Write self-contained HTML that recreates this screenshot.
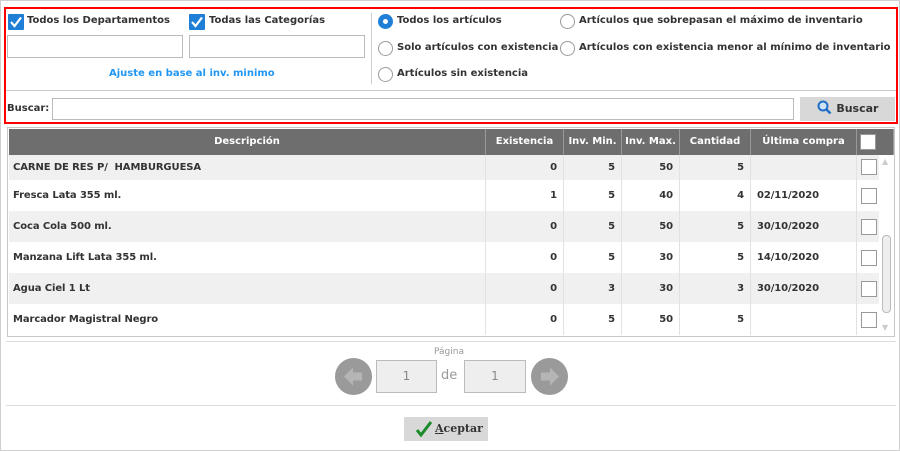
<!DOCTYPE html>
<html><head><meta charset="utf-8"><style>
*{box-sizing:border-box;margin:0;padding:0}
body{width:900px;height:451px;background:#fff;font-family:"DejaVu Sans",sans-serif;font-size:10px;font-weight:bold;color:#333;position:relative;overflow:hidden;border:1px solid #cfcfcf}
.a{position:absolute}
.red{left:3px;top:6px;width:894px;height:117px;border:2px solid #f00}
.cb{width:16px;height:16px;background:#1f7fd6;border-radius:1px}
.inp{border:1px solid #bbb;background:#fff}
.rad{width:15px;height:15px;border:1px solid #999;border-radius:50%;background:#fff}
.t{white-space:nowrap}
.hd{top:128px;height:26px;background:#6e6e6e;color:#fff;text-align:center;line-height:26px;border-right:1px solid #999;font-size:10px}
.row{left:8px;width:870px;height:31px;letter-spacing:-0.1px}
.c{position:absolute;top:0;height:100%;line-height:31px;text-align:right;padding-right:6px;border-right:1px solid #e2e2e2}
.sq{position:absolute;left:852px;width:16px;height:16px;border:1px solid #999;background:#fff}
</style></head><body>
<div class="a red"></div>
<div class="a cb" style="left:7px;top:13px"><svg width="16" height="16"><path d="M3 8l3.5 4L13 3.5" stroke="#fff" stroke-width="2.2" fill="none"/></svg></div>
<div class="a t" style="left:26px;top:14px">Todos los Departamentos</div>
<div class="a cb" style="left:188px;top:13px"><svg width="16" height="16"><path d="M3 8l3.5 4L13 3.5" stroke="#fff" stroke-width="2.2" fill="none"/></svg></div>
<div class="a t" style="left:208px;top:14px">Todas las Categorías</div>
<div class="a inp" style="left:6px;top:34px;width:176px;height:23px"></div>
<div class="a inp" style="left:188px;top:34px;width:176px;height:23px"></div>
<div class="a t" style="left:108px;top:67px;color:#2196f3">Ajuste en base al inv. minimo</div>
<div class="a" style="left:370px;top:12px;width:1px;height:71px;background:#ccc"></div>
<div class="a rad" style="left:377px;top:13px;background:#1f7fd6;border-color:#1f7fd6"><div style="width:5px;height:5px;background:#fff;border-radius:50%;margin:4px"></div></div>
<div class="a t" style="left:396px;top:14px">Todos los artículos</div>
<div class="a rad" style="left:559px;top:13px"></div>
<div class="a t" style="left:578px;top:14px">Artículos que sobrepasan el máximo de inventario</div>
<div class="a rad" style="left:377px;top:40px"></div>
<div class="a t" style="left:396px;top:41px">Solo artículos con existencia</div>
<div class="a rad" style="left:559px;top:40px"></div>
<div class="a t" style="left:578px;top:41px">Artículos con existencia menor al mínimo de inventario</div>
<div class="a rad" style="left:377px;top:66px"></div>
<div class="a t" style="left:396px;top:67px">Artículos sin existencia</div>
<div class="a" style="left:5px;top:89px;width:890px;height:1px;background:#ccc"></div>
<div class="a t" style="left:6px;top:102px">Buscar:</div>
<div class="a inp" style="left:51px;top:97px;width:742px;height:22px"></div>
<div class="a" style="left:799px;top:96px;width:95px;height:24px;background:#d8d8d8;text-align:center;line-height:24px;font-size:11px"><svg width="16" height="14" style="vertical-align:-2px"><circle cx="6" cy="6" r="4.5" stroke="#1f6fc6" stroke-width="2" fill="#cfe3f7"/><path d="M9.5 9.5l4 4" stroke="#1f6fc6" stroke-width="2.5"/></svg> Buscar</div>
<div class="a" style="left:6px;top:126px;width:888px;height:210px;border:1px solid #c8c8c8"></div>
<div class="a hd" style="left:8px;width:477px">Descripción</div>
<div class="a hd" style="left:485px;width:78px">Existencia</div>
<div class="a hd" style="left:563px;width:58px">Inv. Min.</div>
<div class="a hd" style="left:621px;width:58px">Inv. Max.</div>
<div class="a hd" style="left:679px;width:71px">Cantidad</div>
<div class="a hd" style="left:750px;width:106px">Última compra</div>
<div class="a hd" style="left:856px;width:37px"><div style="position:absolute;left:3px;top:5px;width:16px;height:16px;border:1px solid #999;background:#fff"></div></div>
<div class="a" style="left:878px;top:154px;width:15px;height:181px;background:#fff"></div>
<div class="a" style="left:881px;top:234px;width:9px;height:78px;border:1px solid #bbb;border-radius:4px;background:#eee"></div>
<div class="a t" style="left:881px;top:156px;color:#ccc;font-size:8px">▲</div>
<div class="a t" style="left:881px;top:322px;color:#ccc;font-size:8px">▼</div>

<div class="a row" style="top:154px;height:25px;background:#f0f0f0"><div class="c" style="left:0;width:477px;text-align:left;padding-left:4px;line-height:25px">CARNE DE RES P/ &nbsp;HAMBURGUESA</div><div class="c" style="left:477px;width:78px;line-height:25px">0</div><div class="c" style="left:555px;width:58px;line-height:25px">5</div><div class="c" style="left:613px;width:58px;line-height:25px">50</div><div class="c" style="left:671px;width:71px;line-height:25px">5</div><div class="c" style="left:742px;width:106px;line-height:25px"></div><div class="sq" style="top:4px"></div></div>
<div class="a row" style="top:179px;background:#fff"><div class="c" style="left:0;width:477px;text-align:left;padding-left:4px">Fresca Lata 355 ml.</div><div class="c" style="left:477px;width:78px">1</div><div class="c" style="left:555px;width:58px">5</div><div class="c" style="left:613px;width:58px">40</div><div class="c" style="left:671px;width:71px">4</div><div class="c" style="left:742px;width:106px;text-align:left;padding-left:6px">02/11/2020</div><div class="sq" style="top:8px"></div></div>
<div class="a row" style="top:210px;background:#f0f0f0"><div class="c" style="left:0;width:477px;text-align:left;padding-left:4px">Coca Cola 500 ml.</div><div class="c" style="left:477px;width:78px">0</div><div class="c" style="left:555px;width:58px">5</div><div class="c" style="left:613px;width:58px">50</div><div class="c" style="left:671px;width:71px">5</div><div class="c" style="left:742px;width:106px;text-align:left;padding-left:6px">30/10/2020</div><div class="sq" style="top:8px"></div></div>
<div class="a row" style="top:241px;background:#fff"><div class="c" style="left:0;width:477px;text-align:left;padding-left:4px">Manzana Lift Lata 355 ml.</div><div class="c" style="left:477px;width:78px">0</div><div class="c" style="left:555px;width:58px">5</div><div class="c" style="left:613px;width:58px">30</div><div class="c" style="left:671px;width:71px">5</div><div class="c" style="left:742px;width:106px;text-align:left;padding-left:6px">14/10/2020</div><div class="sq" style="top:8px"></div></div>
<div class="a row" style="top:272px;background:#f0f0f0"><div class="c" style="left:0;width:477px;text-align:left;padding-left:4px">Agua Ciel 1 Lt</div><div class="c" style="left:477px;width:78px">0</div><div class="c" style="left:555px;width:58px">3</div><div class="c" style="left:613px;width:58px">30</div><div class="c" style="left:671px;width:71px">3</div><div class="c" style="left:742px;width:106px;text-align:left;padding-left:6px">30/10/2020</div><div class="sq" style="top:8px"></div></div>
<div class="a row" style="top:303px;background:#fff"><div class="c" style="left:0;width:477px;text-align:left;padding-left:4px">Marcador Magistral Negro</div><div class="c" style="left:477px;width:78px">0</div><div class="c" style="left:555px;width:58px">5</div><div class="c" style="left:613px;width:58px">50</div><div class="c" style="left:671px;width:71px">5</div><div class="c" style="left:742px;width:106px"></div><div class="sq" style="top:8px"></div></div>

<div class="a" style="left:5px;top:340px;width:890px;height:1px;background:#ddd"></div>
<div class="a t" style="left:433px;top:346px;font-size:9px;font-weight:normal;color:#999">Página</div>
<div class="a" style="left:334px;top:357px;width:37px;height:37px;border-radius:50%;background:#9a9a9a"><svg width="37" height="37"><path d="M9 18.5l9-9v5h9v8h-9v5z" fill="#b5b5b5"/></svg></div>
<div class="a" style="left:530px;top:357px;width:37px;height:37px;border-radius:50%;background:#9a9a9a"><svg width="37" height="37"><path d="M28 18.5l-9-9v5h-9v8h9v5z" fill="#b5b5b5"/></svg></div>
<div class="a" style="left:375px;top:359px;width:61px;height:33px;border:1px solid #bbb;background:#eee;text-align:center;line-height:31px;font-weight:normal;color:#888;font-size:12px">1</div>
<div class="a t" style="left:440px;top:367px;font-weight:normal;color:#999;font-size:13px">de</div>
<div class="a" style="left:463px;top:359px;width:62px;height:33px;border:1px solid #bbb;background:#eee;text-align:center;line-height:31px;font-weight:normal;color:#888;font-size:12px">1</div>
<div class="a" style="left:5px;top:404px;width:890px;height:1px;background:#ddd"></div>
<div class="a" style="left:403px;top:416px;width:84px;height:24px;background:#d8d8d8;line-height:24px;font-family:'DejaVu Serif',serif;color:#333;font-size:11px"><svg width="16" height="16" style="position:absolute;left:12px;top:4px"><path d="M1 9l4 5L15 1" stroke="#1b8a2a" stroke-width="3" fill="none"/></svg><span style="position:absolute;left:31px"><u>A</u>ceptar</span></div>
</body></html>
